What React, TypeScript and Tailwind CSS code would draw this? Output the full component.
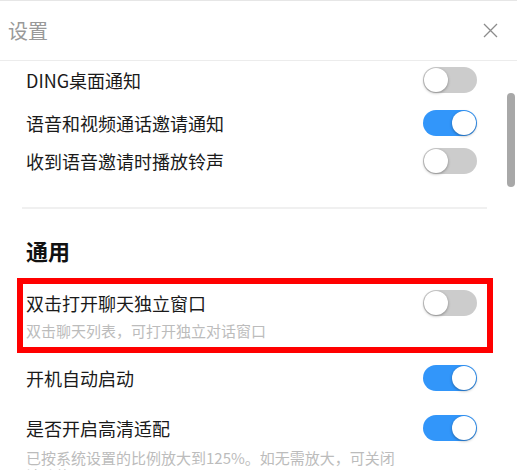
import React, { useState } from 'react';

type ToggleProps = { on: boolean; onChange?: () => void };

function Toggle({ on, onChange }: ToggleProps) {
  return (
    <button
      onClick={onChange}
      className={`relative shrink-0 w-[54px] h-[26px] rounded-full transition-colors ${
        on ? 'bg-[#3296fa]' : 'bg-[#cccccc]'
      }`}
    >
      <span
        className={`absolute top-[1px] w-[24px] h-[24px] rounded-full bg-white shadow-[0_1px_3px_rgba(0,0,0,0.35)] transition-all ${
          on ? 'left-[29px]' : 'left-[1px]'
        }`}
      />
    </button>
  );
}

export default function App() {
  const [opts, setOpts] = useState({
    ding: false,
    voice: true,
    ring: false,
    dblclick: false,
    autostart: true,
    hidpi: true,
  });
  const flip = (k: keyof typeof opts) => setOpts((o) => ({ ...o, [k]: !o[k] }));

  return (
    <div
      className="w-[517px] h-[470px] overflow-hidden bg-white border-t border-[#e6e6e6] flex flex-col text-[#1a1a1a]"
      style={{ fontFamily: '"Noto Sans CJK SC", "Noto Sans", sans-serif' }}
    >
      {/* Header */}
      <div className="h-[60px] shrink-0 flex items-center justify-between pl-[8px] pr-[19px] border-b border-[#ececec]">
        <span className="text-[20px] text-[#999999] leading-none">设置</span>
        <svg width="15" height="15" viewBox="0 0 15 15" className="text-[#8c8c8c]">
          <path d="M1 1L14 14M14 1L1 14" stroke="currentColor" strokeWidth="1.3" fill="none" />
        </svg>
      </div>

      {/* Body */}
      <div className="flex-1 flex min-h-0 overflow-hidden">
        <div className="flex-1 pl-[26px] pr-[30px]">
          <div className="pt-[2px] h-[36px] flex items-center justify-between">
            <span className="text-[18px] leading-none">DING桌面通知</span>
            <Toggle on={opts.ding} onChange={() => flip('ding')} />
          </div>
          <div className="mt-[7px] h-[38px] flex items-center justify-between">
            <span className="text-[18px] leading-none">语音和视频通话邀请通知</span>
            <Toggle on={opts.voice} onChange={() => flip('voice')} />
          </div>
          <div className="h-[38px] flex items-center justify-between">
            <span className="text-[18px] leading-none">收到语音邀请时播放铃声</span>
            <Toggle on={opts.ring} onChange={() => flip('ring')} />
          </div>

          <div className="mt-[27px] h-[2px] bg-[#f0f0f0] -ml-[4px] -mr-[10px]" />

          <div className="mt-[26px] h-[30px] flex items-center">
            <h2 className="text-[22px] font-bold leading-none text-[#111111]">通用</h2>
          </div>

          {/* Highlighted row */}
          <div className="mt-[13px] -ml-[9px] -mr-[16px] border-[6px] border-[#ff0000] pl-[3px] pr-[10px] pb-[7px]">
            <div className="h-[38px] flex items-center justify-between">
              <span className="text-[18px] leading-none">双击打开聊天独立窗口</span>
              <Toggle on={opts.dblclick} onChange={() => flip('dblclick')} />
            </div>
            <p className="h-[18px] text-[15px] leading-[18px] text-[#bcbcbc]">
              双击聊天列表，可打开独立对话窗口
            </p>
          </div>

          <div className="mt-[6px] h-[38px] flex items-center justify-between">
            <span className="text-[18px] leading-none">开机自动启动</span>
            <Toggle on={opts.autostart} onChange={() => flip('autostart')} />
          </div>
          <div className="mt-[12px] h-[38px] flex items-center justify-between">
            <span className="text-[18px] leading-none">是否开启高清适配</span>
            <Toggle on={opts.hidpi} onChange={() => flip('hidpi')} />
          </div>
          <p className="mt-[2px] w-[378px] text-[15px] leading-[18px] text-[#bcbcbc]">
            已按系统设置的比例放大到125%。如无需放大，可关闭该功能
          </p>
        </div>

        {/* Scrollbar */}
        <div className="w-[10px] shrink-0 pt-[32px] pr-[2px]">
          <div className="w-[8px] h-[94px] rounded-full bg-[#a8a8a8]" />
        </div>
      </div>
    </div>
  );
}
